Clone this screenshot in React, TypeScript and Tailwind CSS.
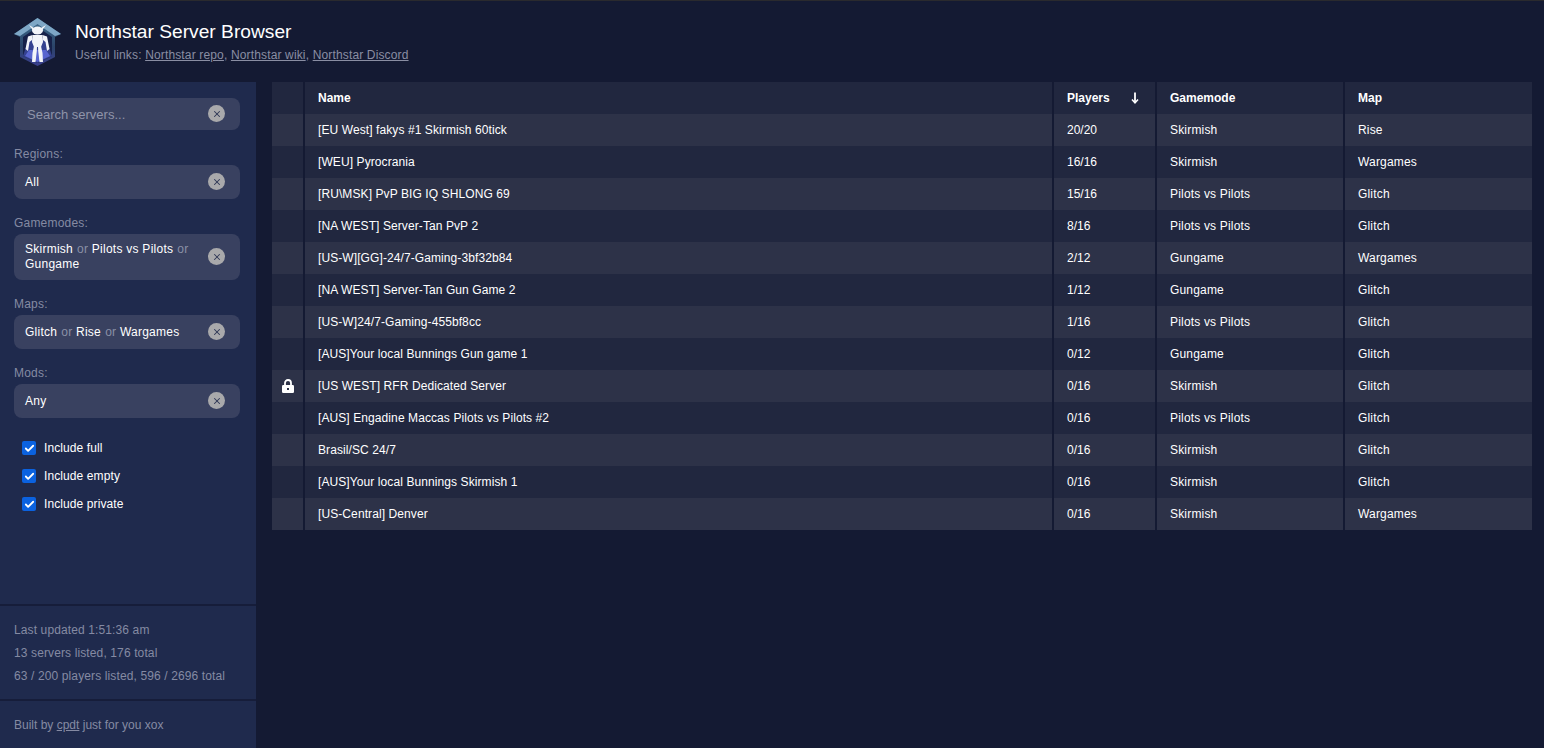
import React from "react";
import { Check, X } from "lucide-react";

const servers = [
  { name: "[EU West] fakys #1 Skirmish 60tick", players: "20/20", mode: "Skirmish", map: "Rise" },
  { name: "[WEU] Pyrocrania", players: "16/16", mode: "Skirmish", map: "Wargames" },
  { name: "[RU\\MSK] PvP BIG IQ SHLONG 69", players: "15/16", mode: "Pilots vs Pilots", map: "Glitch" },
  { name: "[NA WEST] Server-Tan PvP 2", players: "8/16", mode: "Pilots vs Pilots", map: "Glitch" },
  { name: "[US-W][GG]-24/7-Gaming-3bf32b84", players: "2/12", mode: "Gungame", map: "Wargames" },
  { name: "[NA WEST] Server-Tan Gun Game 2", players: "1/12", mode: "Gungame", map: "Glitch" },
  { name: "[US-W]24/7-Gaming-455bf8cc", players: "1/16", mode: "Pilots vs Pilots", map: "Glitch" },
  { name: "[AUS]Your local Bunnings Gun game 1", players: "0/12", mode: "Gungame", map: "Glitch" },
  { name: "[US WEST] RFR Dedicated Server", players: "0/16", mode: "Skirmish", map: "Glitch", locked: true },
  { name: "[AUS] Engadine Maccas Pilots vs Pilots #2", players: "0/16", mode: "Pilots vs Pilots", map: "Glitch" },
  { name: "Brasil/SC 24/7", players: "0/16", mode: "Skirmish", map: "Glitch" },
  { name: "[AUS]Your local Bunnings Skirmish 1", players: "0/16", mode: "Skirmish", map: "Glitch" },
  { name: "[US-Central] Denver", players: "0/16", mode: "Skirmish", map: "Wargames" },
];

const ClearButton = () => (
  <span className="mb-[1px] flex h-[17px] w-[17px] shrink-0 items-center justify-center rounded-full bg-[#a9a9ab] text-[#2f3756]">
    <X size={10} strokeWidth={2.5} />
  </span>
);

const Or = () => <span className="ml-[0.5px] text-[#8a90a6]"> or </span>;

const Filter = ({ label, children }: { label: string; children: React.ReactNode }) => (
  <div className="mt-[16px]">
    <div className="mb-[2px] h-[17px] text-xs leading-[17px] tracking-[0.2px] text-[#858aa3]">{label}</div>
    <div className="flex min-h-[34px] items-center justify-between rounded-lg bg-[#394160] py-[8px] pl-[11px] pr-[15px] text-xs leading-[15px] tracking-[0.25px] text-white">
      <div className="w-[170px]">{children}</div>
      <ClearButton />
    </div>
  </div>
);

const Toggle = ({ label }: { label: string }) => (
  <label className="flex h-7 items-center gap-2 text-xs tracking-[0.1px] text-white">
    <span className="flex h-[14px] w-[14px] items-center justify-center rounded-[2px] bg-[#0b62e0]">
      <Check size={11} strokeWidth={4} />
    </span>
    {label}
  </label>
);

const Logo = () => (
  <svg width="47" height="48" viewBox="0 0 47 48" className="shrink-0">
    <defs>
      <linearGradient id="shell" x1="0" y1="0" x2="0" y2="1">
        <stop offset="0" stopColor="#3f6f90" />
        <stop offset="0.6" stopColor="#2b4468" />
        <stop offset="1" stopColor="#3a3f8f" />
      </linearGradient>
    </defs>
    <path d="M23.5 0 L47 16 L41 19 L41 39 L23.5 48 L6 39 L6 19 L0 16 Z" fill="url(#shell)" />
    <path d="M23.5 0 L47 16 L41 18 L23.5 6 L6 18 L0 16 Z" fill="#7ea7c6" />
    <path d="M9 19 L23.5 9 L38 19 L38 38 L23.5 45 L9 38 Z" fill="#17224a" />
    <path d="M9 38 L15 20 L32 20 L38 38 L23.5 45 Z" fill="#34418f" />
    <path d="M15 32 L32 32 L36 38 L23.5 44 L11 38 Z" fill="#5865cf" />
    <g fill="#f2f4f9">
      <ellipse cx="23.5" cy="12.5" rx="5.5" ry="4" />
      <path d="M15 7 L20 10 L19 12.5 Z" />
      <path d="M32 7 L27 10 L28 12.5 Z" />
      <path d="M18.5 17 H28.5 L29 24 L27 29 H20 L18 24 Z" />
      <path d="M18.5 17 L14 18.5 L11.5 31 L14 33 L15.5 24 L18 22 Z" />
      <path d="M28.5 17 L33 18.5 L35.5 31 L33 33 L31.5 24 L29 22 Z" />
      <path d="M20 28 L18.5 35 L18 44 H21.5 L22.8 33 L23 29 Z" />
      <path d="M27 28 L28.5 35 L29 44 H25.5 L24.2 33 L24 29 Z" />
    </g>
  </svg>
);

const SortArrow = () => (
  <svg width="8" height="12" viewBox="0 0 8 12" fill="none" stroke="white" strokeWidth="1.8">
    <path d="M4 0.5 V10.5" />
    <path d="M1 7.5 L4 10.8 L7 7.5" strokeWidth="1.5" />
  </svg>
);

const Padlock = () => (
  <svg width="12" height="14" viewBox="0 0 12 14">
    <path d="M3 7 V4 a3 3 0 0 1 6 0 V7" fill="none" stroke="white" strokeWidth="1.8" />
    <rect x="0" y="6" width="12" height="8" rx="1.2" fill="white" />
    <rect x="5" y="9" width="2" height="2" fill="#2d3248" />
  </svg>
);

const cellBase = "border-l-2 border-[#141a33] pl-[13px] text-left";

export default function App() {
  return (
    <div className="flex h-[748px] flex-col overflow-hidden bg-[#141a33] font-['Liberation_Sans',Arial,sans-serif] text-white">
      <header className="flex h-[82px] shrink-0 items-center gap-[14px] border-t border-[#2a2a2e] pl-[14px]">
        <Logo />
        <div>
          <h1 className="text-[19.2px] leading-[24px] text-white">Northstar Server Browser</h1>
          <p className="mt-[3px] text-xs leading-[16px] tracking-[0.15px] text-[#8a8ea3]">
            Useful links: <a className="underline">Northstar repo</a>, <a className="underline">Northstar wiki</a>,{" "}
            <a className="underline">Northstar Discord</a>
          </p>
        </div>
      </header>

      <div className="flex min-h-0 flex-1">
        <aside className="flex w-[256px] shrink-0 flex-col bg-[#1f2a4d]">
          <div className="flex-1 pl-[14px] pr-[16px] pt-[16px]">
            <div className="flex h-[32px] items-center justify-between rounded-lg bg-[#394160] pl-[13px] pr-[15px]">
              <span className="mt-[1px] text-[13px] text-[#8f94a9]">Search servers...</span>
              <ClearButton />
            </div>
            <Filter label="Regions:">All</Filter>
            <Filter label="Gamemodes:">
              Skirmish <Or /> Pilots vs Pilots <Or /> Gungame
            </Filter>
            <Filter label="Maps:">
              Glitch <Or /> Rise <Or /> Wargames
            </Filter>
            <Filter label="Mods:">Any</Filter>
            <div className="mt-[16px] pl-2">
              <Toggle label="Include full" />
              <Toggle label="Include empty" />
              <Toggle label="Include private" />
            </div>
          </div>
          <div className="h-[95px] border-t-2 border-[#161d3a] px-[14px] pt-[13.4px] text-xs leading-[22.67px] tracking-[0.12px] text-[#858aa3]">
            <div>Last updated 1:51:36 am</div>
            <div>13 servers listed, 176 total</div>
            <div>63 / 200 players listed, 596 / 2696 total</div>
          </div>
          <div className="h-[49px] border-t-2 border-[#161d3a] px-[14px] pt-[13px] text-xs leading-[22.67px] text-[#858aa3]">
            Built by <a className="underline">cpdt</a> just for you xox
          </div>
        </aside>

        <main className="min-w-0 flex-1 pl-4 pr-3">
          <table className="w-full table-fixed border-separate border-spacing-0 text-xs">
            <colgroup>
              <col className="w-[31px]" />
              <col />
              <col className="w-[103px]" />
              <col className="w-[188px]" />
              <col className="w-[189px]" />
            </colgroup>
            <thead>
              <tr className="h-8 bg-[#21273f] font-bold">
                <th />
                <th className={cellBase}>Name</th>
                <th className={cellBase}>
                  <div className="flex items-center justify-between pr-[16px]">
                    Players
                    <SortArrow />
                  </div>
                </th>
                <th className={cellBase}>Gamemode</th>
                <th className={cellBase}>Map</th>
              </tr>
            </thead>
            <tbody>
              {servers.map((server, i) => (
                <tr key={server.name} className={i % 2 === 0 ? "h-8 bg-[#2d3248]" : "h-8 bg-[#21273f]"}>
                  <td>
                    {server.locked && (
                      <div className="flex justify-center pl-[1px]">
                        <Padlock />
                      </div>
                    )}
                  </td>
                  <td className={`${cellBase} tracking-[0.09px]`}>{server.name}</td>
                  <td className={cellBase}>{server.players}</td>
                  <td className={`${cellBase} tracking-[0.18px]`}>{server.mode}</td>
                  <td className={`${cellBase} tracking-[0.18px]`}>{server.map}</td>
                </tr>
              ))}
            </tbody>
          </table>
        </main>
      </div>
    </div>
  );
}
